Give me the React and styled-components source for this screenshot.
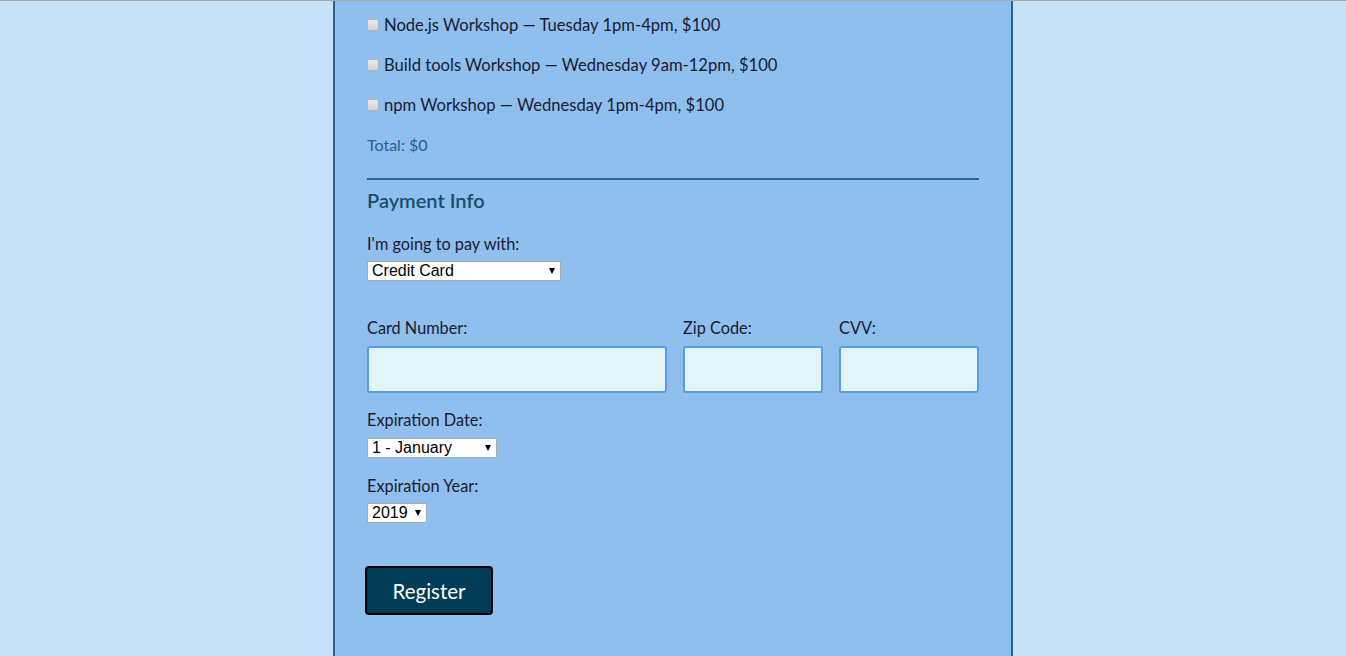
import React from "react"
import styled, { createGlobalStyle } from "styled-components"

const GlobalStyle = createGlobalStyle`
  html, body {
    margin: 0;
    padding: 0;
  }
  body {
    background: #c6e2f9;
    border-top: 1px solid #a9a9a9;
    font-family: Lato, "Open Sans", sans-serif;
    color: #1c1b2e;
    overflow: hidden;
  }
`

const Panel = styled.form`
  box-sizing: border-box;
  width: 680px;
  min-height: 655px;
  margin: 0 auto;
  padding: 4px 32px 40px;
  background: #8ebfee;
  border-left: 2px solid #27658a;
  border-right: 2px solid #27658a;
`

const Activity = styled.label`
  display: flex;
  align-items: center;
  height: 40px;
  font-size: 16.6px;
`

const Check = styled.input.attrs({ type: "checkbox" })`
  appearance: none;
  box-sizing: border-box;
  width: 12px;
  height: 12px;
  margin: -1px 5px 0 0;
  border: 1px solid #b4b4b4;
  border-radius: 2px;
  background: linear-gradient(#ececec, #d3d3d3);
`

const Total = styled.p`
  margin: 0;
  height: 40px;
  line-height: 40px;
  font-size: 16px;
  color: #2b628a;
`

const Rule = styled.hr`
  margin: 13px 0 0;
  border: 0;
  height: 2px;
  background: #2c6a90;
`

const Heading = styled.h3`
  margin: 8px 0 0;
  font-size: 20px;
  line-height: 24px;
  font-weight: 600;
  color: #194d6a;
`

const Label = styled.label`
  display: block;
  margin-top: ${(p) => p.$gap}px;
  font-size: 16.3px;
  line-height: 20px;
`

const SelectWrap = styled.span`
  position: relative;
  display: inline-block;
  margin-top: ${(p) => p.$gap}px;
  width: ${(p) => p.$w}px;
`

const Select = styled.select`
  appearance: none;
  box-sizing: border-box;
  display: block;
  width: 100%;
  height: 20px;
  margin: 0;
  padding: 0 0 0 4px;
  border: 1px solid #a9a9a9;
  border-radius: 0;
  background: #fff;
  color: #000;
  font-family: "Liberation Sans", Arial, sans-serif;
  font-size: 16px;
  line-height: 18px;
`

const Arrow = styled.span`
  position: absolute;
  right: 6px;
  top: 7px;
  width: 0;
  height: 0;
  border-left: 3.5px solid transparent;
  border-right: 3.5px solid transparent;
  border-top: 6px solid #000;
  pointer-events: none;
`

const CardRow = styled.div`
  display: grid;
  grid-template-columns: 1fr 140px 140px;
  column-gap: 16px;
  margin-top: 37px;
`

const Field = styled.div`
  display: flex;
  flex-direction: column;
`

const FieldLabel = styled.label`
  font-size: 16.3px;
  line-height: 20px;
  margin-bottom: 8px;
`

const TextInput = styled.input`
  box-sizing: border-box;
  width: 100%;
  height: 47px;
  border: 2px solid #5c9de2;
  border-radius: 3px;
  background: #e3f5fb;
  font-size: 16px;
  padding: 0 8px;
`

const Block = styled.div``

const Button = styled.button`
  display: block;
  box-sizing: border-box;
  width: 128px;
  height: 49px;
  margin: 43px 0 0 -2px;
  border: 2px solid #000;
  border-radius: 4px;
  background: #003c55;
  color: #fff;
  font-family: Lato, "Open Sans", sans-serif;
  font-size: 20.5px;
`

const DropDown = ({ w, gap, children }) => (
  <SelectWrap $w={w} $gap={gap}>
    <Select>{children}</Select>
    <Arrow />
  </SelectWrap>
)

const workshops = [
  "Node.js Workshop — Tuesday 1pm-4pm, $100",
  "Build tools Workshop — Wednesday 9am-12pm, $100",
  "npm Workshop — Wednesday 1pm-4pm, $100",
]

export default function App() {
  return (
    <>
      <GlobalStyle />
      <Panel onSubmit={(e) => e.preventDefault()}>
        {workshops.map((w) => (
          <Activity key={w}>
            <Check />
            {w}
          </Activity>
        ))}
        <Total>Total: $0</Total>
        <Rule />
        <Heading>Payment Info</Heading>
        <Label $gap={22}>I'm going to pay with:</Label>
        <DropDown w={194} gap={7}>
          <option>Credit Card</option>
          <option>PayPal</option>
          <option>Bitcoin</option>
        </DropDown>
        <CardRow>
          <Field>
            <FieldLabel>Card Number:</FieldLabel>
            <TextInput />
          </Field>
          <Field>
            <FieldLabel>Zip Code:</FieldLabel>
            <TextInput />
          </Field>
          <Field>
            <FieldLabel>CVV:</FieldLabel>
            <TextInput />
          </Field>
        </CardRow>
        <Block>
          <Label $gap={17}>Expiration Date:</Label>
          <DropDown w={130} gap={8}>
            <option>1 - January</option>
            <option>2 - February</option>
          </DropDown>
        </Block>
        <Block>
          <Label $gap={18}>Expiration Year:</Label>
          <DropDown w={60} gap={7}>
            <option>2019</option>
            <option>2020</option>
          </DropDown>
        </Block>
        <Button type="submit">Register</Button>
      </Panel>
    </>
  )
}
